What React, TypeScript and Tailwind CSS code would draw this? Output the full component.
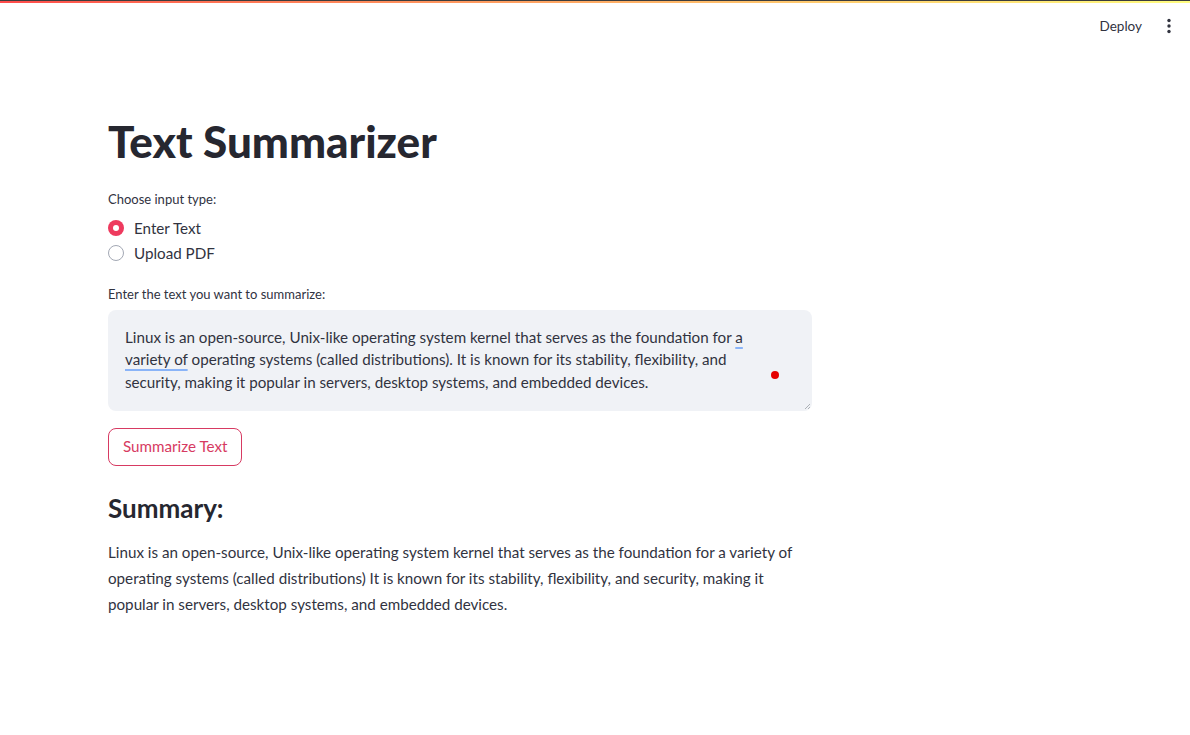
const summary =
  'Linux is an open-source, Unix-like operating system kernel that serves as the foundation for a variety of operating systems (called distributions) It is known for its stability, flexibility, and security, making it popular in servers, desktop systems, and embedded devices.';

function Radio({ label, checked }: { label: string; checked?: boolean }) {
  return (
    <label className="flex items-center gap-[10px] h-[25px] text-[15.2px] text-[#31333f]">
      {checked ? (
        <span className="w-4 h-4 rounded-full bg-[#ee3a5e] flex items-center justify-center">
          <span className="w-[6px] h-[6px] rounded-full bg-white" />
        </span>
      ) : (
        <span className="w-4 h-4 rounded-full border border-[#a3a8b4] bg-white" />
      )}
      {label}
    </label>
  );
}

export default function App() {
  return (
    <div className="min-h-[735px] bg-white font-['Lato','Noto_Sans',sans-serif] text-[#31333f]">
      <div className="h-px bg-[#3d3d3d]" />
      <div className="h-[2px] bg-gradient-to-r from-[#ff4b4b] to-[#fffd80]" />
      <header className="h-[45px] flex items-center justify-end pr-[19px] gap-[25px]">
        <button className="text-[13.5px] text-[#31333f] mt-[1px]">Deploy</button>
        <svg width="4" height="16" viewBox="0 0 4 16" className="mt-[1px]">
          <circle cx="2" cy="2.5" r="1.7" fill="#31333f" />
          <circle cx="2" cy="8" r="1.7" fill="#31333f" />
          <circle cx="2" cy="13.5" r="1.7" fill="#31333f" />
        </svg>
      </header>

      <main className="w-[704px] ml-[108px] pt-[67px]">
        <h1 className="text-[44px] font-black leading-[1.2] text-[#262730]">Text Summarizer</h1>

        <p className="mt-[21px] text-[13px] leading-[20px]">Choose input type:</p>
        <div className="mt-[7px] flex flex-col">
          <Radio label="Enter Text" checked />
          <Radio label="Upload PDF" />
        </div>

        <p className="mt-[18px] text-[13px] leading-[20px]">Enter the text you want to summarize:</p>
        <div className="relative mt-[6px] h-[101px] rounded-[8px] bg-[#f0f2f6] px-[17px] pt-[16px] text-[15.2px] leading-[22.5px] text-[#31333f]">
          <p className="pr-[50px]">
            Linux is an open-source, Unix-like operating system kernel that serves as the foundation for{' '}
            <span className="underline decoration-[#8ab4f8] decoration-2 underline-offset-[4px]">a</span>{' '}
            <span className="underline decoration-[#8ab4f8] decoration-2 underline-offset-[4px]">variety of</span> operating
            systems (called distributions). It is known for its stability, flexibility, and security, making it popular
            in servers, desktop systems, and embedded devices.
          </p>
          <span className="absolute left-[663px] top-[61px] w-[8px] h-[8px] rounded-full bg-[#e60000]" />
          <svg className="absolute right-[1px] bottom-[1px]" width="7" height="7" viewBox="0 0 7 7">
            <path d="M6 1 L1 6 M6 4 L4 6" stroke="#9aa0a6" strokeWidth="0.8" />
          </svg>
        </div>

        <button className="mt-[17px] h-[38px] px-[14px] rounded-[8px] border border-[#d73a62] text-[#d73a62] text-[15.2px] bg-white">
          Summarize Text
        </button>

        <h3 className="mt-[26px] text-[26px] font-bold leading-[1.3] text-[#262730]">Summary:</h3>
        <p className="mt-[13px] text-[15.2px] leading-[26px] text-[#31333f]">{summary}</p>
      </main>
    </div>
  );
}
